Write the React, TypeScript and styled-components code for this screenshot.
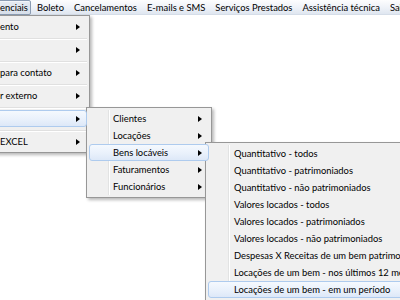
import React from "react";
import styled, { createGlobalStyle, css } from "styled-components";

const GlobalStyle = createGlobalStyle`
  html, body { margin: 0; padding: 0; background: #ffffff; }
  body {
    font-family: Lato, "Open Sans", "Noto Sans", sans-serif;
    font-size: 9.4px;
    color: #000000;
  }
`;

const Screen = styled.div`
  position: relative;
  width: 400px;
  height: 300px;
  overflow: hidden;
  background: #ffffff;
`;

const MenuBar = styled.div`
  display: flex;
  align-items: stretch;
  height: 15px;
  background: linear-gradient(to bottom, #fdfdfe 0%, #eef2f8 55%, #dfe6f0 100%);
  border-bottom: 1px solid #d5dde8;
  box-sizing: border-box;
  white-space: nowrap;
`;

const BarItem = styled.div<{ $active?: boolean; $first?: boolean }>`
  display: flex;
  align-items: center;
  padding: 0 5px;
  box-sizing: border-box;
  height: 15px;
  ${(p) =>
    p.$active &&
    css`
      border: 1px solid #8a9bb2;
      border-radius: 2px;
      background: linear-gradient(to bottom, #e6ebf2, #d6dee9);
      box-shadow: inset 1px 1px 0 rgba(255, 255, 255, 0.5);
    `}
  ${(p) =>
    p.$first &&
    css`
      margin-left: -2px;
      margin-right: 1px;
      padding: 0 2px 0 1px;
    `}
`;

const Dropdown = styled.div<{ $gutter?: number }>`
  position: absolute;
  box-sizing: border-box;
  background: #f0f0f0;
  border: 1px solid #979797;
  padding: 2px;
  box-shadow: 2px 2px 3px rgba(0, 0, 0, 0.28);
  white-space: nowrap;
  &::before {
    content: "";
    display: ${(p) => (p.$gutter ? "block" : "none")};
    position: absolute;
    top: 2px;
    bottom: 2px;
    left: ${(p) => p.$gutter ?? 0}px;
    width: 1px;
    background: #e2e3e3;
    box-shadow: 1px 0 0 #ffffff;
  }
`;

const MainMenu = styled(Dropdown)`
  left: -21px;
  top: 15px;
  width: 111px;
`;

const SubMenu = styled(Dropdown)`
  left: 86px;
  top: 107px;
  width: 126px;
`;

const SubSubMenu = styled(Dropdown)`
  left: 205px;
  top: 142px;
  width: 240px;
`;

const Item = styled.div<{ $active?: boolean; $pad: number }>`
  position: relative;
  z-index: 1;
  display: flex;
  align-items: center;
  height: 17px;
  box-sizing: border-box;
  padding-left: ${(p) => p.$pad}px;
  padding-right: 6px;
  border: 1px solid transparent;
  border-radius: 3px;
  ${(p) =>
    p.$active &&
    css`
      border-color: #aecbee;
      background: linear-gradient(to bottom, #f5f9fe 0%, #e8f0fb 60%, #dde8f8 100%);
    `}
`;

const Label = styled.span`
  flex: 1;
`;

const Arrow = styled.span`
  width: 0;
  height: 0;
  border-left: 4px solid #000000;
  border-top: 3.5px solid transparent;
  border-bottom: 3.5px solid transparent;
`;

const Separator = styled.div`
  height: 6px;
  display: flex;
  align-items: center;
  &::after {
    content: "";
    flex: 1;
    height: 1px;
    background: #e0e0e0;
    box-shadow: 0 1px 0 #ffffff;
  }
`;

const barItems = [
  "Boleto",
  "Cancelamentos",
  "E-mails e SMS",
  "Serviços Prestados",
  "Assistência técnica",
  "Sair",
];

const mainItems = [
  { label: "ento" },
  { label: "" },
  { label: "para contato" },
  { label: "r externo" },
  { label: "", active: true },
  { label: "EXCEL" },
];

const subItems = [
  { label: "Clientes" },
  { label: "Locações" },
  { label: "Bens locáveis", active: true },
  { label: "Faturamentos" },
  { label: "Funcionários" },
];

const subSubItems = [
  "Quantitativo - todos",
  "Quantitativo - patrimoniados",
  "Quantitativo - não patrimoniados",
  "Valores locados - todos",
  "Valores locados - patrimoniados",
  "Valores locados - não patrimoniados",
  "Despesas X Receitas de um bem patrimoniado",
  "Locações de um bem - nos últimos 12 meses",
  "Locações de um bem - em um período",
];

export default function App() {
  return (
    <>
      <GlobalStyle />
      <Screen>
        <MenuBar>
          <BarItem $active $first>
            enciais
          </BarItem>
          {barItems.map((b) => (
            <BarItem key={b}>{b}</BarItem>
          ))}
        </MenuBar>

        <MainMenu>
          {mainItems.map((it, i) => (
            <React.Fragment key={i}>
              {i > 0 && <Separator />}
              <Item $pad={17} $active={it.active}>
                <Label>{it.label}</Label>
                <Arrow />
              </Item>
            </React.Fragment>
          ))}
        </MainMenu>

        <SubMenu $gutter={21}>
          {subItems.map((it) => (
            <Item key={it.label} $pad={23} $active={it.active}>
              <Label>{it.label}</Label>
              <Arrow />
            </Item>
          ))}
        </SubMenu>

        <SubSubMenu $gutter={22}>
          {subSubItems.map((t, i) => (
            <Item key={t} $pad={25} $active={i === subSubItems.length - 1}>
              <Label>{t}</Label>
            </Item>
          ))}
        </SubSubMenu>
      </Screen>
    </>
  );
}
